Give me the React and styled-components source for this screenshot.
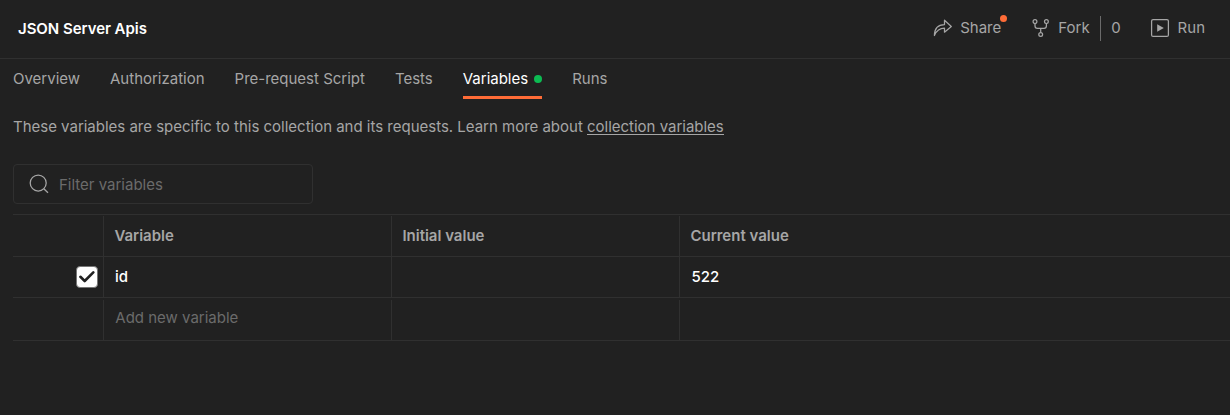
import React from "react";
import styled, { createGlobalStyle } from "styled-components";

const line = "#303030";
const muted = "#a6a6a6";
const faint = "#6b6b6b";

const GlobalStyle = createGlobalStyle`
  *, *::before, *::after { box-sizing: border-box; }
  body {
    margin: 0;
    background: #212121;
    color: ${muted};
    font: 400 15px/20px Inter, sans-serif;
    overflow: hidden;
  }
`;

const Page = styled.main`
  height: 415px;
  background: #212121;
`;

const Header = styled.header`
  display: flex;
  align-items: center;
  justify-content: space-between;
  height: 59px;
  padding: 0 25px 2px 18px;
  border-bottom: 1px solid ${line};
`;

const Title = styled.h1`
  margin: 0;
  padding-top: 1px;
  font-size: 15px;
  font-weight: 600;
  line-height: 20px;
  letter-spacing: -0.04px;
  color: #fff;
`;

const Actions = styled.div`
  display: flex;
  align-items: center;
`;

const Action = styled.div`
  position: relative;
  display: flex;
  align-items: center;
  gap: ${(p) => p.$gap}px;
  margin-left: ${(p) => p.$offset || 0}px;
`;

const Notice = styled.span`
  position: absolute;
  top: -3px;
  right: -6px;
  width: 7px;
  height: 7px;
  border-radius: 50%;
  background: #ff6c37;
`;

const Count = styled.span`
  height: 25px;
  margin-left: 10.5px;
  padding-left: 10px;
  border-left: 1px solid #6b6b6b;
  line-height: 24px;
`;

const Icon = styled.svg`
  display: block;
  flex: none;
  fill: none;
  stroke: ${muted};
  stroke-width: 1.25;
`;

const Tabs = styled.nav`
  display: flex;
  gap: 30px;
  padding-left: 13px;
`;

const Tab = styled.span`
  display: flex;
  align-items: center;
  height: 40px;
  padding-top: 2px;
  gap: 6px;
  border-bottom: 3px solid ${(p) => (p.$active ? "#ff6c37" : "transparent")};
  color: ${(p) => (p.$active ? "#fff" : muted)};
  letter-spacing: -0.004px;
`;

const Dot = styled.i`
  width: 8px;
  height: 8px;
  border-radius: 50%;
  background: #0cbb52;
`;

const Note = styled.p`
  margin: 18px 0 27px 13px;
  letter-spacing: -0.01px;
`;

const Link = styled.span`
  display: inline-block;
  height: 18px;
  border-bottom: 1px solid ${muted};
`;

const Filter = styled.div`
  display: flex;
  align-items: center;
  gap: 10px;
  width: 300px;
  height: 40px;
  margin: 0 0 10px 13px;
  padding-left: 15px;
  border: 1px solid ${line};
  border-radius: 4px;
  color: ${faint};
`;

const Placeholder = styled.span`
  padding-top: 2px;
`;

const Table = styled.section`
  margin-left: 13px;
  border-top: 1px solid ${line};
`;

const Row = styled.div`
  display: grid;
  grid-template-columns: 91px 288px 288px 1fr;
  height: ${(p) => p.$height}px;
  padding-top: ${(p) => p.$inset || 0}px;
  border-bottom: 1px solid ${line};
`;

const Cell = styled.div`
  display: flex;
  align-items: center;
  padding: 0 0 ${(p) => p.$lift || 0}px ${(p) => p.$indent || 11}px;
  border-right: 1px solid ${line};
  color: ${(p) => p.$color || muted};
  font-weight: ${(p) => p.$weight || 400};
  &:last-child { border-right: 0; }
`;

const HeadCell = styled(Cell)`
  padding-left: 10.4px;
  font-weight: 600;
`;

const CheckCell = styled(Cell)`
  justify-content: flex-end;
  padding-right: 5px;
`;

const CheckBox = styled.span`
  display: grid;
  place-items: center;
  width: 22px;
  height: 22px;
  border: 1px solid #777;
  border-radius: 4px;
  background: #fff;
`;

export default function App() {
  return (
    <Page>
      <GlobalStyle />
      <Header>
        <Title>JSON Server Apis</Title>
        <Actions>
          <Action $gap={7.5}>
            <Icon width="20" height="20" viewBox="0 0 20 20">
              <path d="M11.5 6.5V2.2L18.3 8.5L11.5 14.2V10.2C6.8 10.2 3.7 12.2 1.4 17.5C1.5 10.8 4.8 6.5 11.5 6.5Z" strokeLinejoin="round" />
            </Icon>
            <span>Share</span>
            <Notice />
          </Action>
          <Action $gap={7.5} $offset={29.5}>
            <Icon width="20" height="20" viewBox="0 0 20 20">
              <circle cx="4" cy="3.6" r="1.9" />
              <circle cx="15.4" cy="3.6" r="1.9" />
              <circle cx="9.7" cy="16.5" r="1.9" />
              <path d="M4 5.5V8Q4 10.4 6.4 10.4H13Q15.4 10.4 15.4 8V5.5M9.7 10.4V14.6" />
            </Icon>
            <span>Fork</span>
          </Action>
          <Count>0</Count>
          <Action $gap={8} $offset={29}>
            <Icon width="20" height="20" viewBox="0 0 20 20">
              <rect x="1.6" y="1.6" width="16.8" height="16.8" rx="1.5" />
              <path d="M7.2 6.2V13.8L13.8 10Z" fill={muted} stroke="none" />
            </Icon>
            <span>Run</span>
          </Action>
        </Actions>
      </Header>
      <Tabs>
        <Tab>Overview</Tab>
        <Tab>Authorization</Tab>
        <Tab>Pre-request Script</Tab>
        <Tab>Tests</Tab>
        <Tab $active>Variables<Dot /></Tab>
        <Tab>Runs</Tab>
      </Tabs>
      <Note>
        These variables are specific to this collection and its requests. Learn more about <Link>collection variables</Link>
      </Note>
      <Filter>
        <Icon width="20" height="20" viewBox="0 0 20 20">
          <circle cx="9.2" cy="9" r="8" />
          <path d="M14.8 14.7L19 18.8" />
        </Icon>
        <Placeholder>Filter variables</Placeholder>
      </Filter>
      <Table>
        <Row $height={42} $inset={1}>
          <Cell />
          <HeadCell>Variable</HeadCell>
          <HeadCell>Initial value</HeadCell>
          <HeadCell>Current value</HeadCell>
        </Row>
        <Row $height={41}>
          <CheckCell>
            <CheckBox>
              <svg width="16" height="14" viewBox="0 0 16 14" fill="none" stroke="#212121" strokeWidth="2.6">
                <path d="M1.4 6.8L5.7 11L14.3 2.3" strokeLinecap="round" strokeLinejoin="round" />
              </svg>
            </CheckBox>
          </CheckCell>
          <Cell $color="#fff" $weight={500}>id</Cell>
          <Cell />
          <Cell $color="#fff" $weight={500} $indent={11.6}>522</Cell>
        </Row>
        <Row $height={43} $inset={2}>
          <Cell />
          <Cell $color={faint} $lift={4} $indent={11.3}>Add new variable</Cell>
          <Cell />
          <Cell />
        </Row>
      </Table>
    </Page>
  );
}
